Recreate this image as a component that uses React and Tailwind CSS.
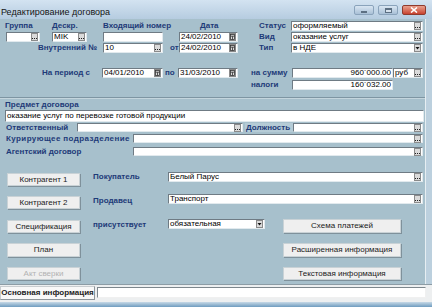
import React from "react";

const lbl = "shrink-0 text-[8px] font-bold text-[#1e3a78] leading-none whitespace-nowrap";

function Mini({ kind }) {
  return (
    <span className="shrink-0 w-[7px] h-[8px] mr-[1px] bg-[#dadada] border border-[#8a8a8a] flex items-center justify-center">
      <svg width="5" height="6" viewBox="0 0 5 6">
        {kind === "dots" && (
          <g fill="#222">
            <rect x="0" y="4" width="1" height="1" />
            <rect x="2" y="4" width="1" height="1" />
            <rect x="4" y="4" width="1" height="1" />
          </g>
        )}
        {kind === "cal" && (
          <g fill="none" stroke="#333" strokeWidth="0.8">
            <rect x="0.5" y="0.5" width="4" height="5" />
            <line x1="0.5" y1="2.2" x2="4.5" y2="2.2" />
            <line x1="2.5" y1="2.2" x2="2.5" y2="5.5" />
          </g>
        )}
        {kind === "drop" && <path d="M0.5 2 L4.5 2 L2.5 4.5 Z" fill="#111" />}
      </svg>
    </span>
  );
}

function Field({ w, h = "h-[10px]", children, btn, right }) {
  return (
    <div
      className={`flex items-center shrink-0 bg-white border border-t-[#6f7b84] border-l-[#6f7b84] border-r-[#e2eaee] border-b-[#e2eaee] ${h} ${w}`}
    >
      <span
        className={`flex-1 min-w-0 overflow-hidden whitespace-nowrap px-[1px] text-[8px] leading-none text-black ${right ? "text-right" : ""}`}
      >
        {children}
      </span>
      {btn && <Mini kind={btn} />}
    </div>
  );
}

function Button({ w, h = "h-[13px]", children, disabled }) {
  return (
    <div
      className={`flex items-center justify-center shrink-0 bg-[#efefef] border border-[#c9d2d6] shadow-[1px_1px_0_#7f919b] text-[8px] leading-none ${disabled ? "text-[#b2b2b2]" : "text-[#1a1a1a]"} ${w} ${h}`}
    >
      {children}
    </div>
  );
}

export default function App() {
  return (
    <div className="w-[432px] h-[307px] overflow-hidden flex flex-col bg-[#a7c0cc] font-['Liberation_Sans',Arial,sans-serif]">
      {/* title bar */}
      <div className="h-[19px] shrink-0 flex items-start bg-gradient-to-b from-[#d3e3f1] to-[#b6cce0]">
        <span className="mt-[8px] ml-[1px] text-[9px] leading-none text-[#141414]">Редактирование договора</span>
        <div className="ml-auto mr-[6px] mt-[5px] flex gap-[4px]">
          <div className="w-[20px] h-[10px] rounded-[2px] bg-gradient-to-b from-[#d9e6f2] to-[#a9c0d6] border border-[#8aa3bb] flex items-center justify-center">
            <div className="w-[6px] h-[2px] bg-white border border-[#5c6f82] mt-[3px]" />
          </div>
          <div className="w-[20px] h-[10px] rounded-[2px] bg-gradient-to-b from-[#d9e6f2] to-[#a9c0d6] border border-[#8aa3bb] flex items-center justify-center">
            <div className="w-[7px] h-[5px] border border-[#5c6f82] border-t-2 bg-white/40" />
          </div>
          <div className="w-[24px] h-[10px] rounded-[2px] bg-gradient-to-b from-[#e8a08d] to-[#c7402f] border border-[#8f3a2d] flex items-center justify-center">
            <svg width="8" height="6" viewBox="0 0 8 6">
              <path d="M1 0.5 L7 5.5 M7 0.5 L1 5.5" stroke="#fff" strokeWidth="1.6" />
            </svg>
          </div>
        </div>
      </div>

      <div className="flex flex-1">
        {/* main panel */}
        <div className="w-[425px] shrink-0 flex flex-col pt-[1px]">
          <div className="flex items-center h-[11px]">
            <span className={`${lbl} ml-[5px] w-[47px]`}>Группа</span>
            <span className={`${lbl} w-[51px]`}>Дескр.</span>
            <span className={`${lbl} w-[97px]`}>Входящий номер</span>
            <span className={`${lbl} w-[59px]`}>Дата</span>
            <span className={`${lbl} w-[32px]`}>Статус</span>
            <Field w="w-[132px]" btn="dots">оформляемый</Field>
          </div>
          <div className="flex items-center h-[11px]">
            <div className="ml-[6px]">
              <Field w="w-[34px]" btn="dots" />
            </div>
            <div className="ml-[12px]">
              <Field w="w-[35px]" btn="dots">MIK</Field>
            </div>
            <div className="ml-[16px]">
              <Field w="w-[60px]" />
            </div>
            <div className="ml-[16px]">
              <Field w="w-[59px]" btn="cal">24/02/2010</Field>
            </div>
            <span className={`${lbl} ml-[21px] w-[32px]`}>Вид</span>
            <Field w="w-[132px]" btn="dots">оказание услуг</Field>
          </div>
          <div className="flex items-center h-[11px]">
            <span className={`${lbl} w-[97px] text-right`}>Внутренний №</span>
            <div className="ml-[6px]">
              <Field w="w-[60px]" btn="dots">10</Field>
            </div>
            <span className={`${lbl} ml-[7px] w-[9px]`}>от</span>
            <Field w="w-[59px]" btn="cal">24/02/2010</Field>
            <span className={`${lbl} ml-[21px] w-[32px]`}>Тип</span>
            <Field w="w-[132px]" btn="drop">в НДЕ</Field>
          </div>

          <div className="flex items-center h-[11px] mt-[14px]">
            <span className={`${lbl} ml-[42px] w-[60px]`}>На период с</span>
            <Field w="w-[61px]" btn="cal">04/01/2010</Field>
            <span className={`${lbl} ml-[2px] w-[13px]`}>по</span>
            <Field w="w-[60px]" btn="cal">31/03/2010</Field>
            <span className={`${lbl} ml-[13px] w-[41px]`}>на сумму</span>
            <Field w="w-[101px]" right>960`000.00</Field>
            <Field w="w-[30px]" btn="dots">руб</Field>
          </div>
          <div className="flex items-center h-[11px] mt-[1px]">
            <span className={`${lbl} ml-[251px] w-[41px]`}>налоги</span>
            <Field w="w-[101px]" right>160`032.00</Field>
          </div>

          {/* separator */}
          <div className="mt-[7px] h-[2px] border-t border-t-[#7e95a2] border-b border-b-[#c4d5dd]" />

          <div className="flex items-center h-[10px] mt-[1px]">
            <span className={`${lbl} ml-[5px]`}>Предмет договора</span>
          </div>
          <div className="ml-[5px]">
            <Field w="w-[419px]" h="h-[12px]">оказание услуг по перевозке готовой продукции</Field>
          </div>
          <div className="flex items-center h-[9px] mt-[1px]">
            <span className={`${lbl} ml-[6px] w-[71px]`}>Ответственный</span>
            <Field w="w-[166px]" h="h-[9px]" btn="dots" />
            <span className={`${lbl} ml-[2px] w-[48px] h-[9px] pl-[1px] flex items-center bg-[#b5cbd6]`}>Должность</span>
            <Field w="w-[130px]" h="h-[9px]" btn="dots" />
          </div>
          <div className="flex items-center h-[9px] mt-[2px]">
            <span className={`${lbl} ml-[6px] w-[127px] tracking-[0.4px]`}>Курирующее подразделение</span>
            <Field w="w-[290px]" h="h-[9px]" btn="dots" />
          </div>
          <div className="flex items-center h-[9px] mt-[4px]">
            <span className={`${lbl} ml-[6px] w-[127px]`}>Агентский договор</span>
            <Field w="w-[290px]" h="h-[9px]" btn="dots" />
          </div>

          {/* lower block */}
          <div className="flex items-start mt-[16px]">
            <div className="ml-[7px] mt-[1px]">
              <Button w="w-[73px]">Контрагент 1</Button>
            </div>
            <span className={`${lbl} ml-[13px] w-[75px] mt-[1px]`}>Покупатель</span>
            <Field w="w-[255px]" btn="dots">Белый Парус</Field>
          </div>
          <div className="flex items-start mt-[8px]">
            <div className="ml-[7px] mt-[2px]">
              <Button w="w-[73px]">Контрагент 2</Button>
            </div>
            <span className={`${lbl} ml-[13px] w-[75px] mt-[3px]`}>Продавец</span>
            <Field w="w-[255px]" btn="dots">Транспорт</Field>
          </div>
          <div className="flex items-start mt-[10px]">
            <div className="ml-[7px] mt-[1px]">
              <Button w="w-[73px]">Спецификация</Button>
            </div>
            <span className={`${lbl} ml-[13px] w-[75px] mt-[2px]`}>присутствует</span>
            <Field w="w-[97px]" btn="drop">обязательная</Field>
            <div className="ml-[18px]">
              <Button w="w-[118px]" h="h-[14px]">Схема платежей</Button>
            </div>
          </div>
          <div className="flex items-start mt-[10px]">
            <div className="ml-[7px]">
              <Button w="w-[73px]" h="h-[14px]">План</Button>
            </div>
            <div className="ml-[203px]">
              <Button w="w-[118px]" h="h-[14px]">Расширенная информация</Button>
            </div>
          </div>
          <div className="flex items-start mt-[10px]">
            <div className="ml-[7px]">
              <Button w="w-[73px]" disabled>Акт сверки</Button>
            </div>
            <div className="ml-[203px]">
              <Button w="w-[118px]">Текстовая информация</Button>
            </div>
          </div>
        </div>
        {/* right frame */}
        <div className="flex-1 border-l border-l-[#e6eef2] bg-[#bcd0de]" />
      </div>

      {/* bottom tab bar */}
      <div className="h-[18px] shrink-0 flex items-start bg-[#edeff0] border-t border-t-[#8c9ca5]">
        <div className="mt-[1px] w-[95px] h-[14px] flex items-center justify-center bg-[#f8f8f8] border border-[#c8cccf] border-b-[#8e969b] border-r-[#8e969b] text-[8px] font-bold leading-none text-[#222]">
          Основная информация
        </div>
        <div className="ml-[2px] mt-[2px] w-[329px] h-[11px] bg-white border border-t-[#7d878d] border-l-[#7d878d] border-r-[#f0f0f0] border-b-[#f0f0f0]" />
      </div>
      <div className="h-[5px] shrink-0 bg-gradient-to-b from-[#c7d9e6] to-[#6f9cbf]" />
    </div>
  );
}
